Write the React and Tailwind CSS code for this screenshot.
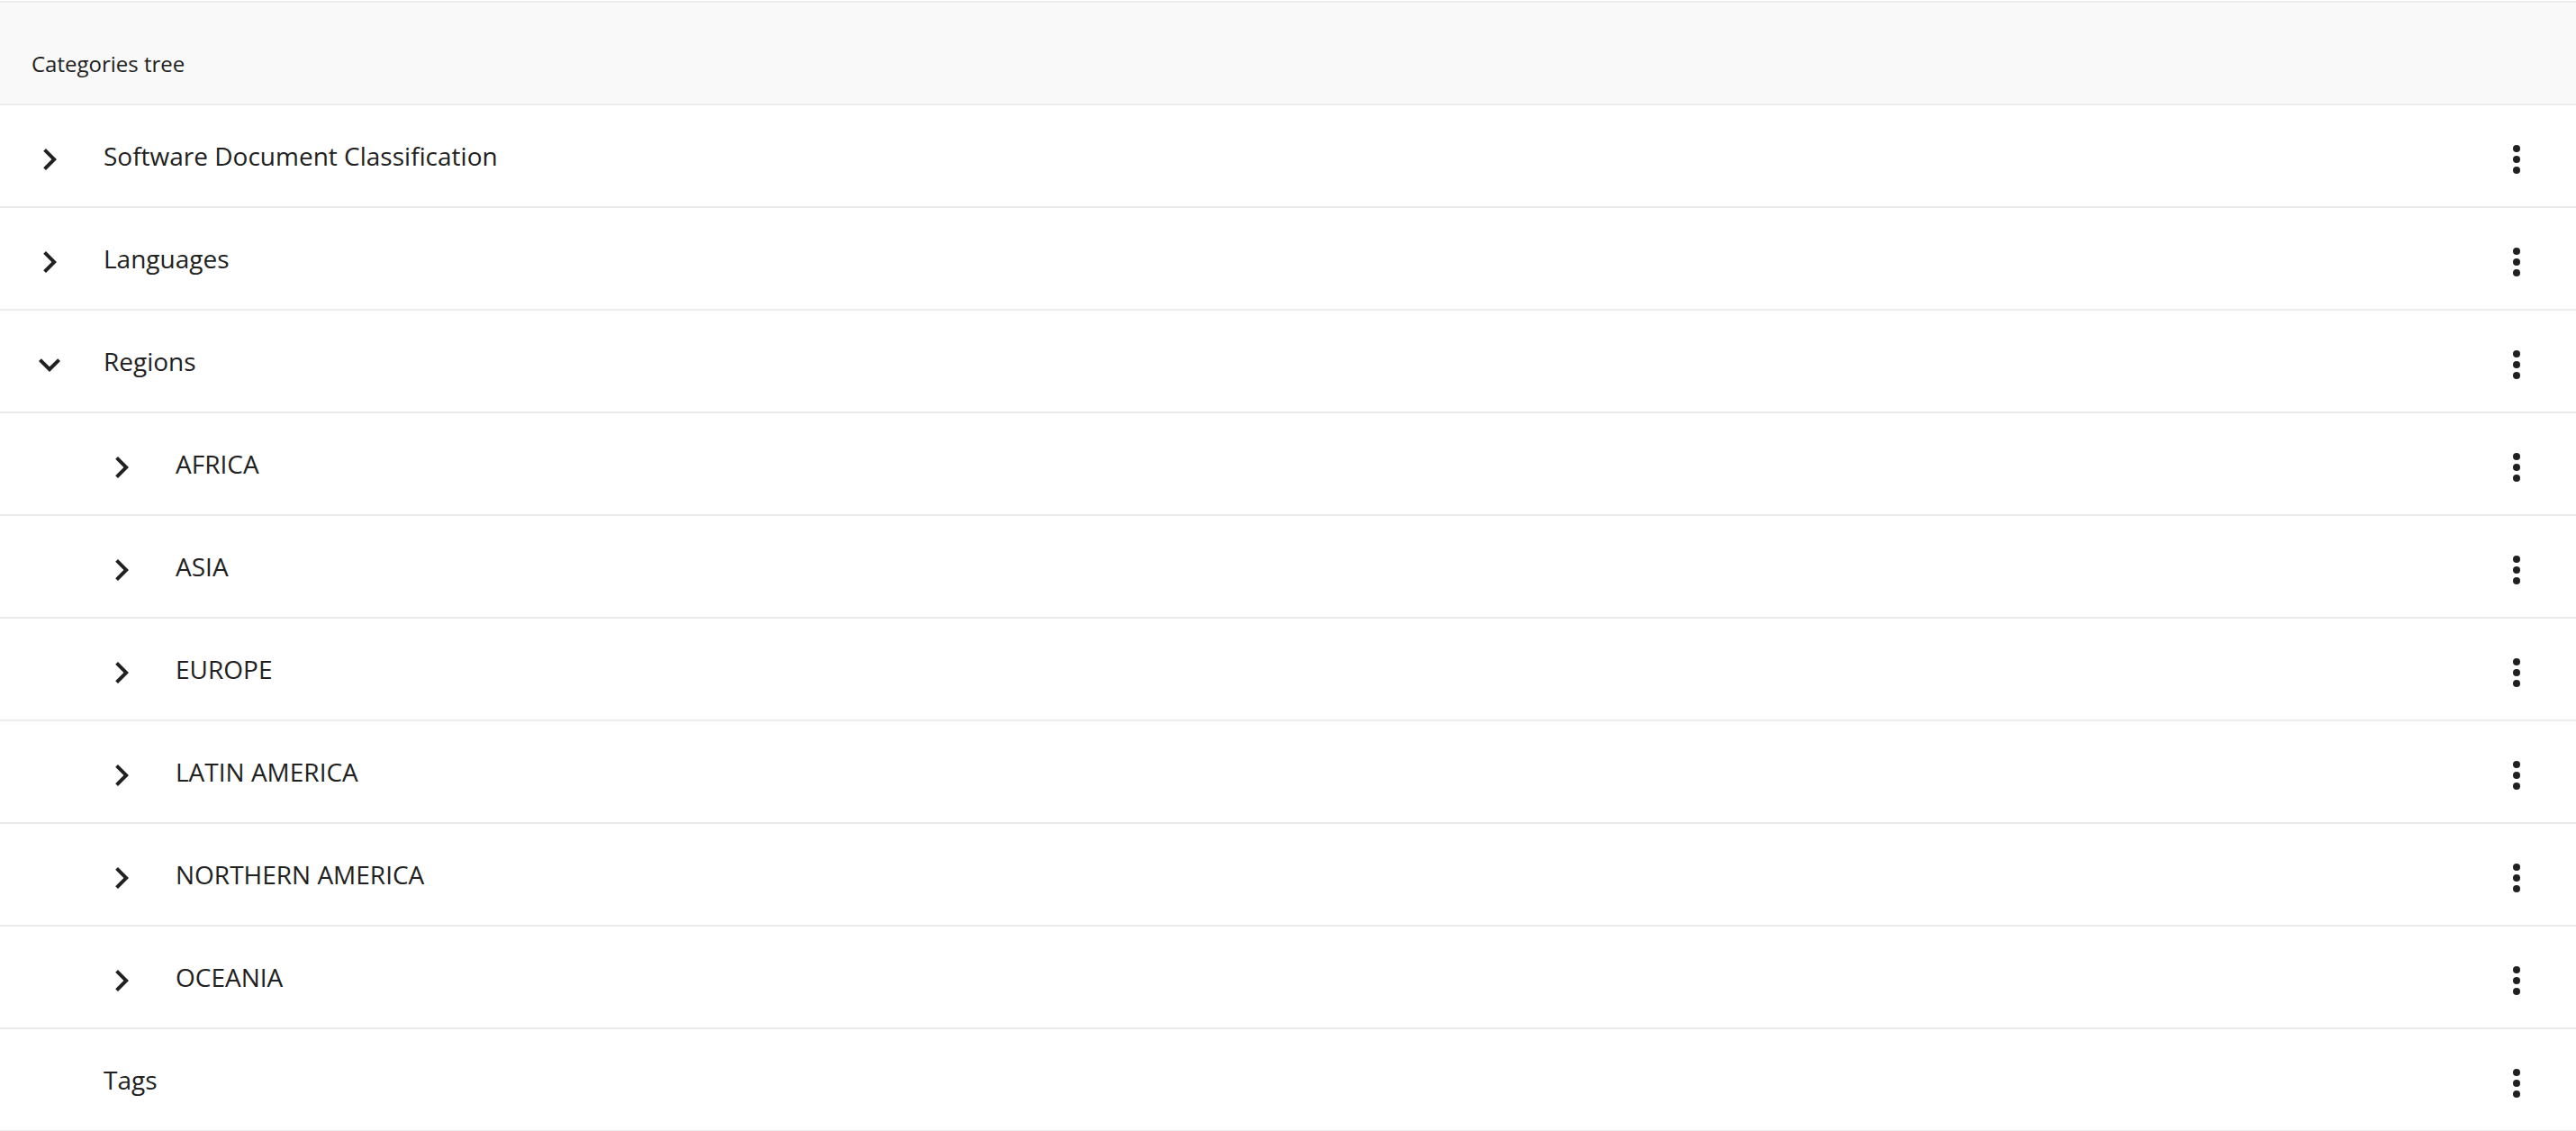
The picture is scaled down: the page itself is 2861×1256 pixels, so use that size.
import React from "react";

const ChevronRight = () => (
  <svg viewBox="0 0 24 24" className="w-12 h-12 translate-y-[4px]" fill="#212121">
    <path d="M8.59 16.59L13.17 12 8.59 7.41 10 6l6 6-6 6-1.41-1.41z" />
  </svg>
);

const ChevronDown = () => (
  <svg viewBox="0 0 24 24" className="w-12 h-12 translate-y-[4px]" fill="#212121">
    <path d="M7.41 8.59L12 13.17l4.59-4.58L18 10l-6 6-6-6 1.41-1.41z" />
  </svg>
);

const MoreVert = () => (
  <svg viewBox="0 0 24 24" className="w-12 h-12 translate-y-[4px]" fill="#212121">
    <circle cx="12" cy="6" r="2" />
    <circle cx="12" cy="12" r="2" />
    <circle cx="12" cy="18" r="2" />
  </svg>
);

const rows = [
  { label: "Software Document Classification", level: 0, icon: "right" },
  { label: "Languages", level: 0, icon: "right" },
  { label: "Regions", level: 0, icon: "down" },
  { label: "AFRICA", level: 1, icon: "right" },
  { label: "ASIA", level: 1, icon: "right" },
  { label: "EUROPE", level: 1, icon: "right" },
  { label: "LATIN AMERICA", level: 1, icon: "right" },
  { label: "NORTHERN AMERICA", level: 1, icon: "right" },
  { label: "OCEANIA", level: 1, icon: "right" },
  { label: "Tags", level: 0, icon: null },
];

export default function App() {
  return (
    <div
      className="w-full bg-white text-[#212121] pt-px"
      style={{ fontFamily: '"Open Sans", "Liberation Sans", sans-serif' }}
    >
      <div className="border-t-2 border-[#eeeeee] bg-[#f9f9f9] h-[116px] border-b-2 border-b-[#ebebeb] pl-[35px] pt-[50px]">
        <span className="text-[24px] leading-[36px] block">Categories tree</span>
      </div>
      {rows.map((r) => (
        <div
          key={r.label}
          className="flex items-center h-[114px] border-b-2 border-[#ebebeb]"
        >
          <div
            className={
              "flex items-center flex-1 " +
              (r.level === 1 ? "pl-[111px]" : "pl-[31px]")
            }
          >
            <div className="w-12 h-12 flex items-center justify-center">
              {r.icon === "right" && <ChevronRight />}
              {r.icon === "down" && <ChevronDown />}
            </div>
            <span className="ml-[36px] text-[28px] leading-[40px]">{r.label}</span>
          </div>
          <div className="pr-[42px]">
            <MoreVert />
          </div>
        </div>
      ))}
    </div>
  );
}
